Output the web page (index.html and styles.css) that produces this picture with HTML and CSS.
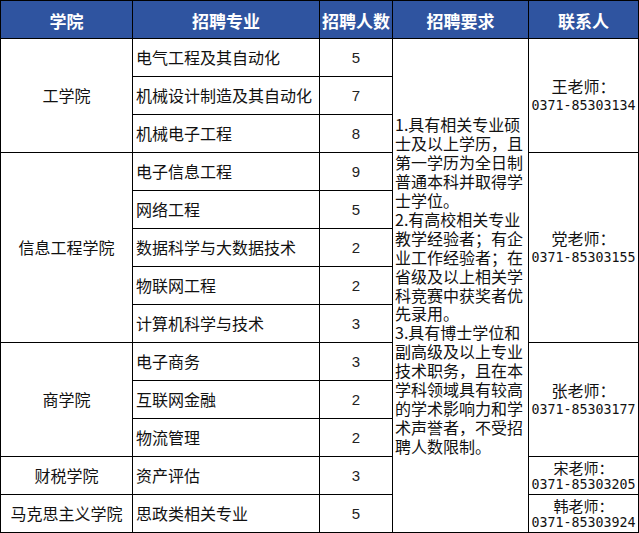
FILE: index.html
```html
<!DOCTYPE html>
<html lang="zh-CN">
<head>
<meta charset="utf-8">
<title>招聘表</title>
<link rel="stylesheet" href="styles.css">
</head>
<body>
<div class="table">
  <div class="cell head">学院</div>
  <div class="cell head">招聘专业</div>
  <div class="cell head">招聘人数</div>
  <div class="cell head">招聘要求</div>
  <div class="cell head">联系人</div>

  <div class="cell college span3">工学院</div>
  <div class="cell major">电气工程及其自动化</div>
  <div class="cell num">5</div>
  <div class="cell req span13">1.具有相关专业硕<br>士及以上学历，且<br>第一学历为全日制<br>普通本科并取得学<br>士学位。<br>2.有高校相关专业<br>教学经验者；有企<br>业工作经验者；在<br>省级及以上相关学<br>科竞赛中获奖者优<br>先录用。<br>3.具有博士学位和<br>副高级及以上专业<br>技术职务，且在本<br>学科领域具有较高<br>的学术影响力和学<br>术声誉者，不受招<br>聘人数限制。</div>
  <div class="cell contact span3"><span>王老师：</span><span class="phone">0371-85303134</span></div>

  <div class="cell major">机械设计制造及其自动化</div>
  <div class="cell num">7</div>
  <div class="cell major">机械电子工程</div>
  <div class="cell num">8</div>

  <div class="cell college span5">信息工程学院</div>
  <div class="cell major">电子信息工程</div>
  <div class="cell num">9</div>
  <div class="cell contact span5"><span>党老师：</span><span class="phone">0371-85303155</span></div>
  <div class="cell major">网络工程</div>
  <div class="cell num">5</div>
  <div class="cell major">数据科学与大数据技术</div>
  <div class="cell num">2</div>
  <div class="cell major">物联网工程</div>
  <div class="cell num">2</div>
  <div class="cell major">计算机科学与技术</div>
  <div class="cell num">3</div>

  <div class="cell college span3">商学院</div>
  <div class="cell major">电子商务</div>
  <div class="cell num">3</div>
  <div class="cell contact span3"><span>张老师：</span><span class="phone">0371-85303177</span></div>
  <div class="cell major">互联网金融</div>
  <div class="cell num">2</div>
  <div class="cell major">物流管理</div>
  <div class="cell num">2</div>

  <div class="cell college">财税学院</div>
  <div class="cell major">资产评估</div>
  <div class="cell num">3</div>
  <div class="cell contact small"><span>宋老师：</span><span class="phone">0371-85303205</span></div>

  <div class="cell college">马克思主义学院</div>
  <div class="cell major">思政类相关专业</div>
  <div class="cell num">5</div>
  <div class="cell contact small"><span>韩老师：</span><span class="phone">0371-85303924</span></div>
</div>
</body>
</html>
```
FILE: styles.css
```css
html, body {
  margin: 0;
  padding: 0;
  background: #ffffff;
}
.table {
  display: grid;
  grid-template-columns: 132px 187px 73px 136px 110px;
  grid-auto-rows: 38px;
  border-left: 1px solid #000;
  border-top: 1px solid #000;
  width: 638px;
  font-family: "Noto Sans CJK SC", "Noto Sans", sans-serif;
  font-size: 16px;
  color: #111;
}
.cell {
  box-sizing: border-box;
  border-right: 1px solid #000;
  border-bottom: 1px solid #000;
  display: flex;
  align-items: center;
  justify-content: center;
  line-height: 19px;
  overflow: hidden;
  white-space: nowrap;
}
.head {
  background: #2f54a0;
  color: #ffffff;
  font-weight: bold;
  font-size: 17px;
  padding-top: 2px;
}
.span3 { grid-row: span 3; }
.span5 { grid-row: span 5; }
.span13 { grid-row: span 13; }
.major {
  justify-content: flex-start;
  padding-left: 3px;
}
.num {
  font-family: "Liberation Sans", Arial, sans-serif;
  font-size: 15px;
  color: #222;
}
.req {
  justify-content: flex-start;
  padding-left: 2px;
  font-size: 16px;
  line-height: 18.9px;
}
.contact {
  flex-direction: column;
}
.contact.small {
  line-height: 17px;
  font-size: 15px;
}
.phone {
  font-family: "DejaVu Sans Mono", "Liberation Mono", monospace;
  font-size: 13.3px;
}
```
